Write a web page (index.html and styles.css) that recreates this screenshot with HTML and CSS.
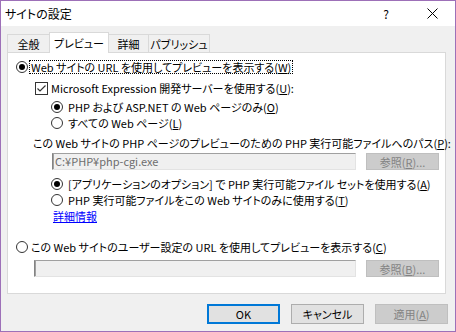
FILE: index.html
```html
<!DOCTYPE html>
<html lang="ja">
<head>
    <meta charset="UTF-8">
    <title>サイトの設定</title>
    <link rel="stylesheet" href="styles.css">
</head>
<body>
    <div class="window">
        <div class="titlebar">
            <span class="title">サイトの設定</span>
            <span class="caption-btn help">?</span>
            <span class="caption-btn close">
                <svg width="11" height="11" viewBox="0 0 11 11"><path d="M0.5 0.5L10.5 10.5M10.5 0.5L0.5 10.5" stroke="#000" stroke-width="1"/></svg>
            </span>
        </div>
        <div class="dialog">
            <div class="tabs">
                <div class="tab tab-general">全般</div>
                <div class="tab tab-preview active">プレビュー</div>
                <div class="tab tab-detail">詳細</div>
                <div class="tab tab-publish">パブリッシュ</div>
            </div>
            <div class="panel">
                <div class="row lv0">
                    <span class="radio checked"></span>
                    <span class="label focus">Web サイトの URL を使用してプレビューを表示する(<u>W</u>)</span>
                </div>
                <div class="row lv-check gap-5">
                    <span class="checkbox">
                        <svg width="11" height="11" viewBox="0 0 11 11"><path d="M1.5 5.5L4 8L9.5 2.5" fill="none" stroke="#333" stroke-width="1.2"/></svg>
                    </span>
                    <span class="label">Microsoft Expression 開発サーバーを使用する(<u>U</u>):</span>
                </div>
                <div class="row lv1 gap-3">
                    <span class="radio checked"></span>
                    <span class="label">PHP および ASP.NET の Web ページのみ(<u>O</u>)</span>
                </div>
                <div class="row lv1">
                    <span class="radio"></span>
                    <span class="label">すべての Web ページ(<u>L</u>)</span>
                </div>
                <div class="row lv-text gap-4">
                    <span class="label">この Web サイトの PHP ページのプレビューのための PHP 実行可能ファイルへのパス(<u>P</u>):</span>
                </div>
                <div class="field-row lv-field gap-2">
                    <div class="field">C:¥PHP¥php-cgi.exe</div>
                    <button class="btn small disabled">参照(<u>R</u>)...</button>
                </div>
                <div class="row lv1 gap-7">
                    <span class="radio checked"></span>
                    <span class="label">[アプリケーションのオプション] で PHP 実行可能ファイル セットを使用する(<u>A</u>)</span>
                </div>
                <div class="row lv1">
                    <span class="radio"></span>
                    <span class="label">PHP 実行可能ファイルをこの Web サイトのみに使用する(<u>T</u>)</span>
                </div>
                <div class="row lv-link">
                    <a class="link" href="#">詳細情報</a>
                </div>
                <div class="row lv0 gap-15">
                    <span class="radio"></span>
                    <span class="label">この Web サイトのユーザー設定の URL を使用してプレビューを表示する(<u>C</u>)</span>
                </div>
                <div class="field-row lv-field2 gap-5">
                    <div class="field wide"></div>
                    <button class="btn small disabled">参照(<u>B</u>)...</button>
                </div>
            </div>
            <div class="buttons">
                <button class="btn default">OK</button>
                <button class="btn">キャンセル</button>
                <button class="btn disabled">適用(<u>A</u>)</button>
            </div>
        </div>
    </div>
</body>
</html>
```

FILE: styles.css
```css
* {
    box-sizing: border-box;
}
body {
    margin: 0;
    font-family: "Noto Sans CJK JP", sans-serif;
    font-size: 11px;
    color: #000;
    font-feature-settings: "palt";
}
.window {
    width: 456px;
    height: 332px;
    border: 1px solid #9d70b8;
    background-color: #f0f0f0;
    display: flex;
    flex-direction: column;
}
.titlebar {
    height: 25px;
    background-color: #fff;
    display: flex;
    align-items: center;
}
.title {
    flex: 1;
    padding-left: 4px;
    font-size: 12px;
}
.caption-btn {
    width: 46px;
    height: 25px;
    display: flex;
    align-items: center;
    justify-content: center;
    font-size: 12px;
}
.tabs {
    display: flex;
    align-items: flex-end;
    height: 20px;
    margin: 6px 0 0 6px;
}
.tab {
    height: 18px;
    border: 1px solid #d9d9d9;
    border-bottom: none;
    margin-left: -1px;
    display: flex;
    align-items: center;
    justify-content: center;
    background-color: #f0f0f0;
}
.tab:first-child {
    margin-left: 0;
}
.tab.active {
    height: 21px;
    margin-bottom: -1px;
    background-color: #fff;
    position: relative;
    z-index: 1;
}
.tab-general { width: 43px; }
.tab-preview { width: 60px; }
.tab-detail { width: 41px; }
.tab-publish { width: 62px; }
.panel {
    margin-left: 6px;
    width: 439px;
    height: 242px;
    background-color: #fff;
    border: 1px solid #d9d9d9;
    padding-top: 6px;
}
.row {
    height: 16px;
    display: flex;
    align-items: center;
    white-space: nowrap;
}
.gap-2 { margin-top: 2px; }
.gap-3 { margin-top: 3px; }
.gap-4 { margin-top: 4px; }
.gap-5 { margin-top: 5px; }
.gap-7 { margin-top: 6px; }
.gap-15 { margin-top: 15px; }
.lv0 { padding-left: 8px; }
.lv-check { padding-left: 27px; }
.lv1 { padding-left: 43px; }
.lv-text { padding-left: 25px; }
.lv-field { padding-left: 44px; }
.lv-link { padding-left: 45px; }
.lv-field2 { padding-left: 26px; }
.radio {
    width: 12px;
    height: 12px;
    border: 1px solid #333;
    border-radius: 50%;
    background-color: #fff;
    display: flex;
    align-items: center;
    justify-content: center;
    flex-shrink: 0;
}
.radio.checked::after {
    content: "";
    width: 6px;
    height: 6px;
    border-radius: 50%;
    background-color: #000;
}
.lv0 .label {
    margin-left: 2px;
    padding: 0 1px;
}
.lv1 .label {
    margin-left: 5px;
}
.checkbox {
    width: 13px;
    height: 13px;
    border: 1px solid #333;
    background-color: #fff;
    display: flex;
    align-items: center;
    justify-content: center;
    flex-shrink: 0;
}
.lv-check .label {
    margin-left: 3px;
}
.focus {
    outline: 1px dotted #000;
    line-height: 12px;
}
.field-row {
    display: flex;
    align-items: center;
    gap: 10px;
}
.field {
    width: 304px;
    height: 17px;
    background-color: #f0f0f0;
    border-style: solid;
    border-width: 1px;
    border-color: #a0a0a0 #e3e3e3 #e3e3e3 #838383;
    box-shadow: inset 1px 0 0 #a0a0a0;
    color: #6d6d6d;
    padding-left: 2px;
    line-height: 14px;
}
.field.wide {
    width: 322px;
}
.link {
    color: #0000ff;
    text-decoration: underline;
}
.btn {
    width: 73px;
    height: 20px;
    padding: 0;
    font-family: inherit;
    font-size: 11px;
    font-feature-settings: "palt";
    color: #000;
    background-color: #e1e1e1;
    border: 1px solid #adadad;
}
.btn.small {
    height: 17px;
}
.btn.default {
    border-color: #0078d7;
    box-shadow: inset 0 0 0 1px #0078d7;
}
.btn.disabled {
    background-color: #cccccc;
    border-color: #bfbfbf;
    color: #838383;
}
.buttons {
    display: flex;
    justify-content: flex-end;
    gap: 11px;
    margin-top: 10px;
    padding-right: 7px;
}
```
